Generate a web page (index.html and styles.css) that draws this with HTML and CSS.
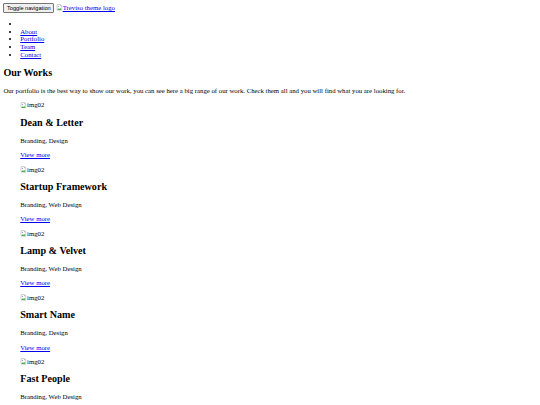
FILE: index.html
```html
<!DOCTYPE html>
<html>
<head>
<meta charset="utf-8">
<title>Treviso</title>
<link rel="stylesheet" href="styles.css">
</head>
<body class="page">
<nav class="navbar">
  <div class="navbar-header">
    <button class="navbar-toggle" type="button">Toggle navigation</button>
    <a class="navbar-brand" href="#"><svg class="broken-icon" viewBox="0 0 16 16"><path d="M2.5 1.5h8l3 3v10h-11z" fill="#fff" stroke="#8a8a8a"/><path d="M10.5 1.5v3h3" fill="none" stroke="#8a8a8a"/><path d="M3 14l3-4 2 2 2-3 3 5z" fill="#4caf50"/><circle cx="6" cy="6" r="1.3" fill="#5b9bd5"/></svg>Treviso theme logo</a>
  </div>
  <ul class="nav-list">
    <li><a href="#page-top"></a></li>
    <li><a href="#about">About</a></li>
    <li><a href="#portfolio">Portfolio</a></li>
    <li><a href="#team">Team</a></li>
    <li><a href="#contact">Contact</a></li>
  </ul>
</nav>
<section class="portfolio">
  <h2 class="section-title">Our Works</h2>
  <p class="section-text">Our portfolio is the best way to show our work, you can see here a big range of our work. Check them all and you will find what you are looking for.</p>
  <figure class="work">
    <span class="alt"><svg class="broken-icon" viewBox="0 0 16 16"><path d="M2.5 1.5h8l3 3v10h-11z" fill="#fff" stroke="#8a8a8a"/><path d="M10.5 1.5v3h3" fill="none" stroke="#8a8a8a"/><path d="M3 14l3-4 2 2 2-3 3 5z" fill="#4caf50"/><circle cx="6" cy="6" r="1.3" fill="#5b9bd5"/></svg>img02</span>
    <figcaption><h3 class="work-title">Dean &amp; Letter</h3><p class="work-tags">Branding, Design</p><a class="work-link" href="#">View more</a></figcaption>
  </figure>
  <figure class="work">
    <span class="alt"><svg class="broken-icon" viewBox="0 0 16 16"><path d="M2.5 1.5h8l3 3v10h-11z" fill="#fff" stroke="#8a8a8a"/><path d="M10.5 1.5v3h3" fill="none" stroke="#8a8a8a"/><path d="M3 14l3-4 2 2 2-3 3 5z" fill="#4caf50"/><circle cx="6" cy="6" r="1.3" fill="#5b9bd5"/></svg>img02</span>
    <figcaption><h3 class="work-title">Startup Framework</h3><p class="work-tags">Branding, Web Design</p><a class="work-link" href="#">View more</a></figcaption>
  </figure>
  <figure class="work">
    <span class="alt"><svg class="broken-icon" viewBox="0 0 16 16"><path d="M2.5 1.5h8l3 3v10h-11z" fill="#fff" stroke="#8a8a8a"/><path d="M10.5 1.5v3h3" fill="none" stroke="#8a8a8a"/><path d="M3 14l3-4 2 2 2-3 3 5z" fill="#4caf50"/><circle cx="6" cy="6" r="1.3" fill="#5b9bd5"/></svg>img02</span>
    <figcaption><h3 class="work-title">Lamp &amp; Velvet</h3><p class="work-tags">Branding, Web Design</p><a class="work-link" href="#">View more</a></figcaption>
  </figure>
  <figure class="work">
    <span class="alt"><svg class="broken-icon" viewBox="0 0 16 16"><path d="M2.5 1.5h8l3 3v10h-11z" fill="#fff" stroke="#8a8a8a"/><path d="M10.5 1.5v3h3" fill="none" stroke="#8a8a8a"/><path d="M3 14l3-4 2 2 2-3 3 5z" fill="#4caf50"/><circle cx="6" cy="6" r="1.3" fill="#5b9bd5"/></svg>img02</span>
    <figcaption><h3 class="work-title">Smart Name</h3><p class="work-tags">Branding, Design</p><a class="work-link" href="#">View more</a></figcaption>
  </figure>
  <figure class="work">
    <span class="alt"><svg class="broken-icon" viewBox="0 0 16 16"><path d="M2.5 1.5h8l3 3v10h-11z" fill="#fff" stroke="#8a8a8a"/><path d="M10.5 1.5v3h3" fill="none" stroke="#8a8a8a"/><path d="M3 14l3-4 2 2 2-3 3 5z" fill="#4caf50"/><circle cx="6" cy="6" r="1.3" fill="#5b9bd5"/></svg>img02</span>
    <figcaption><h3 class="work-title">Fast People</h3><p class="work-tags">Branding, Web Design</p><a class="work-link" href="#">View more</a></figcaption>
  </figure>
</section>
</body>
</html>
```

FILE: styles.css
```css
html {
  background: #fff;
}
.page {
  margin: 0.5em;
  font-family: "Liberation Serif", "Times New Roman", serif;
  font-size: 6.75px;
  line-height: 1.15;
  color: #000;
}
.navbar-header {
  display: block;
}
.navbar-toggle {
  appearance: none;
  -webkit-appearance: none;
  font-family: "Liberation Sans", Arial, sans-serif;
  font-size: 5.625px;
  line-height: 1.15;
  padding: 0.6px 2.6px;
  margin: 0;
  background: #efefef;
  border: 0.6px solid #767676;
  border-radius: 1px;
  color: #000;
  vertical-align: baseline;
}
.navbar-brand {
  color: #0000ee;
}
.broken-icon {
  width: 6.75px;
  height: 6.75px;
  vertical-align: -1px;
}
.nav-list {
  margin: 1em 0;
  padding-left: 2.5em;
}
.nav-list a,
.work-link {
  color: #0000ee;
}
.section-title {
  font-size: 1.5em;
  margin: 0.83em 0;
}
.section-text {
  margin: 1em 0;
}
.work {
  margin: 1em 2.5em;
}
.alt {
  color: #000;
}
.work-title {
  font-size: 1.5em;
  margin: 0.73em 0 0.83em;
}
.work-tags {
  margin: 1em 0;
}
```
